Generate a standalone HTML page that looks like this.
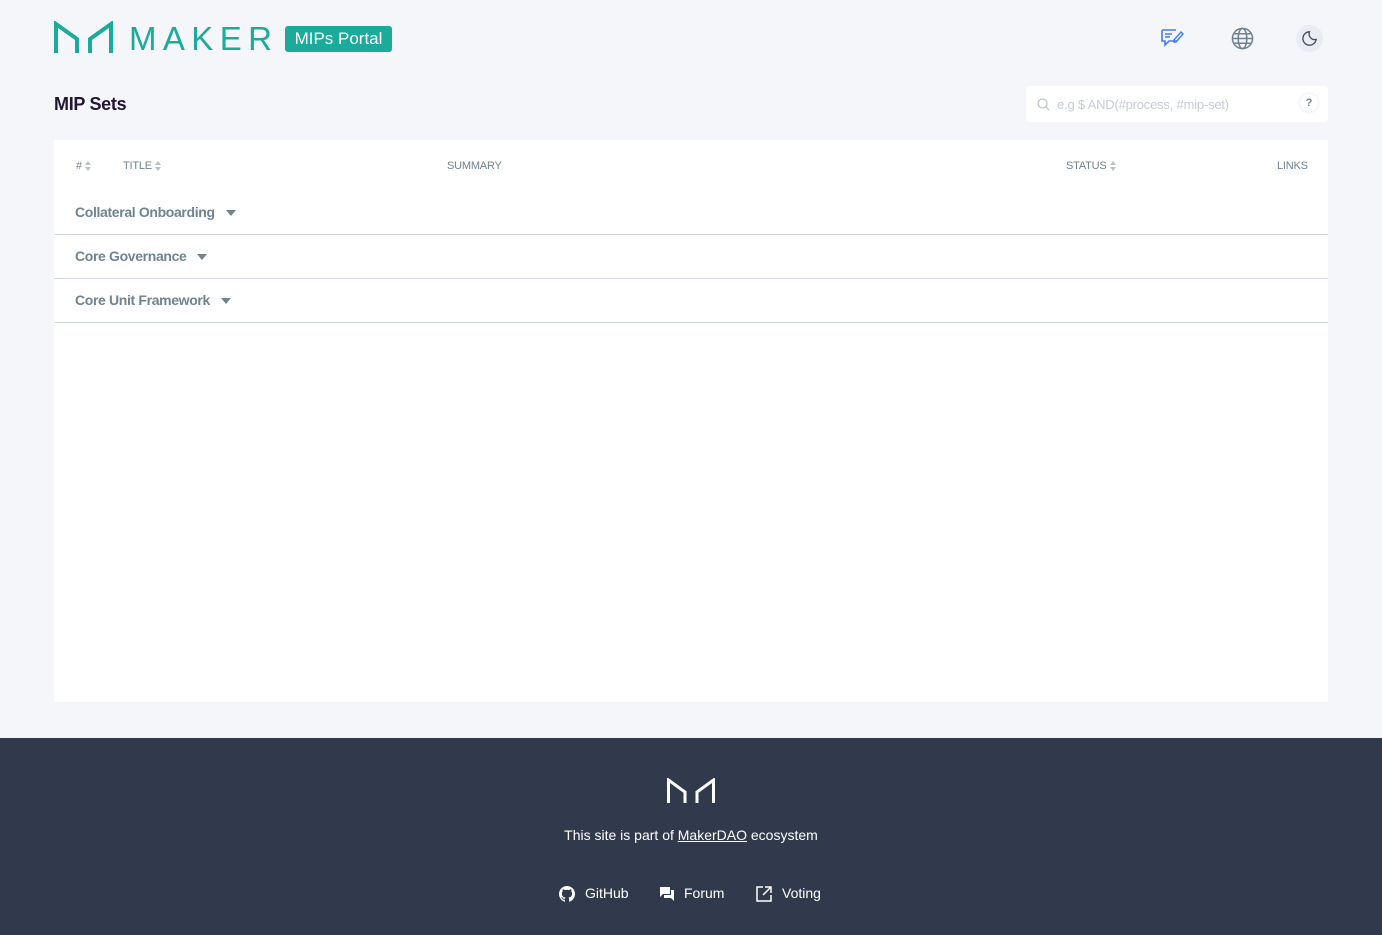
<!DOCTYPE html>
<html><head><meta charset="utf-8"><style>
*{margin:0;padding:0;box-sizing:border-box}
body{width:1382px;height:935px;background:#f4f6fa;font-family:"Liberation Sans",sans-serif;position:relative;overflow:hidden}
.abs{position:absolute}
.maker{left:129px;top:20px;font-size:33px;letter-spacing:6.4px;color:#1aab9b;font-weight:400}
.badge{left:285px;top:26px;width:107px;height:26px;background:#1aab9b;border-radius:3px;color:#fff;font-size:17px;line-height:26px;text-align:center}
h1{position:absolute;left:54px;top:94px;font-size:18px;font-weight:700;color:#231536;letter-spacing:-0.3px}
.search{left:1026px;top:86px;width:302px;height:36px;background:#fff;border-radius:4px}
.card{left:54px;top:140px;width:1274px;height:562px;background:#fff}
.th{font-size:11px;color:#708390;top:160px;letter-spacing:-0.2px}
.row{left:54px;width:1274px;height:44px;border-bottom:1px solid #d4d9e1}
.row span{position:absolute;left:21px;top:13px;font-size:14px;font-weight:700;color:#708390;letter-spacing:-0.35px}
.tri{display:inline-block;width:0;height:0;border-left:5px solid transparent;border-right:5px solid transparent;border-top:6px solid #708390;margin-left:11px;vertical-align:middle}
.footer{left:0;top:738px;width:1382px;height:197px;background:#313a4c;color:#fff}
.sort{display:inline-block;vertical-align:middle;margin-left:3px;width:6px}
</style></head><body>
<svg class="abs" style="left:54px;top:21px" width="59" height="32" viewBox="0 0 59 32"><path d="M2 32V3L23 18V32M57 32V3L36 18V32" fill="none" stroke="#1aab9b" stroke-width="4"/></svg>
<div class="abs maker">MAKER</div>
<div class="abs badge">MIPs Portal</div>
<svg class="abs" style="left:1160px;top:28px" width="24" height="20" viewBox="0 0 24 20"><path d="M2 2h14M2 2v11h3v4l4-4h8" fill="none" stroke="#447afb" stroke-width="1.6"/><path d="M5 6h7M5 9h5" stroke="#447afb" stroke-width="1.6"/><path d="M14 12l7-8 2 2-7 8h-2z" fill="none" stroke="#447afb" stroke-width="1.4"/></svg>
<svg class="abs" style="left:1231px;top:27px" width="23" height="23" viewBox="0 0 24 24"><g fill="none" stroke="#708390" stroke-width="1.6"><circle cx="12" cy="12" r="10.5"/><ellipse cx="12" cy="12" rx="4.5" ry="10.5"/><path d="M1.5 12h21M3 7h18M3 17h18"/></g></svg>
<div class="abs" style="left:1296px;top:25px;width:27px;height:27px;border-radius:50%;background:#e9ecf3"></div>
<svg class="abs" style="left:1300px;top:29px" width="19" height="19" viewBox="0 0 20 20"><path d="M10 3a6 6 0 0 0 7 8 7 7 0 1 1-7-8z" fill="none" stroke="#48495f" stroke-width="1.4"/></svg>
<h1>MIP Sets</h1>
<div class="abs search"><svg class="abs" style="left:11px;top:12px" width="13" height="13" viewBox="0 0 13 13"><circle cx="5.5" cy="5.5" r="4.5" fill="none" stroke="#b6c0cc" stroke-width="1.2"/><path d="M9 9l3 3" stroke="#b6c0cc" stroke-width="1.2"/></svg><span class="abs" style="left:31px;top:11px;font-size:13px;color:#c5ccd6;letter-spacing:-0.2px">e.g $ AND(#process, #mip-set)</span><div class="abs" style="left:274px;top:8px;width:18px;height:18px;border-radius:50%;background:#fff;box-shadow:0 0 3px rgba(0,0,0,.12);font-size:11px;font-weight:700;color:#708390;text-align:center;line-height:18px">?</div></div>
<div class="abs card"></div>
<div class="abs th" style="left:76px">#<svg class="sort" width="6" height="10" viewBox="0 0 6 10"><path d="M0 4L3 0L6 4ZM0 6L3 10L6 6Z" fill="#b6c0cc"/></svg></div>
<div class="abs th" style="left:123px">TITLE<svg class="sort" width="6" height="10" viewBox="0 0 6 10"><path d="M0 4L3 0L6 4ZM0 6L3 10L6 6Z" fill="#b6c0cc"/></svg></div>
<div class="abs th" style="left:447px">SUMMARY</div>
<div class="abs th" style="left:1066px">STATUS<svg class="sort" width="6" height="10" viewBox="0 0 6 10"><path d="M0 4L3 0L6 4ZM0 6L3 10L6 6Z" fill="#b6c0cc"/></svg></div>
<div class="abs th" style="left:1277px">LINKS</div>
<div class="abs row" style="top:191px"><span>Collateral Onboarding<i class="tri"></i></span></div>
<div class="abs row" style="top:235px"><span>Core Governance<i class="tri"></i></span></div>
<div class="abs row" style="top:279px"><span>Core Unit Framework<i class="tri"></i></span></div>
<div class="abs footer">
<svg class="abs" style="left:667px;top:40px" width="48" height="25" viewBox="0 0 48 25"><path d="M1.5 25V2L18 14V25M46.5 25V2L30 14V25" fill="none" stroke="#fff" stroke-width="3"/></svg>
<div class="abs" style="left:0;width:1382px;top:89px;text-align:center;font-size:14px">This site is part of <u>MakerDAO</u> ecosystem</div>
<svg class="abs" style="left:559px;top:148px" width="16" height="16" viewBox="0 0 16 16"><path fill="#fff" d="M8 0C3.6 0 0 3.600 0 8c0 3.5 2.3 6.5 5.5 7.6.4.1.5-.2.5-.4v-1.4c-2.2.5-2.700-1-2.700-1-.4-.9-.9-1.2-.9-1.2-.7-.5.1-.5.1-.5.8.1 1.2.8 1.2.8.7 1.3 1.9.9 2.3.7.1-.5.3-.9.5-1.1-1.8-.2-3.600-.9-3.600-4 0-.9.3-1.600.8-2.100-.1-.2-.4-1 .1-2.100 0 0 .7-.2 2.2.8.6-.2 1.300-.3 2-.3s1.4.1 2 .3c1.5-1 2.2-.8 2.2-.8.4 1.100.2 1.900.1 2.100.5.6.8 1.300.8 2.100 0 3.100-1.900 3.800-3.600 4 .3.3.6.8.6 1.500v2.200c0 .2.1.5.6.4C13.7 14.5 16 11.5 16 8c0-4.4-3.600-8-8-8z"/></svg>
<span class="abs" style="left:585px;top:147px;font-size:14px">GitHub</span>
<svg class="abs" style="left:660px;top:149px" width="15" height="15" viewBox="0 0 15 15"><path fill="#fff" d="M0 0h10v7H3l-3 3zM11 3h3v11l-3-3H4V8h7z"/></svg>
<span class="abs" style="left:684px;top:147px;font-size:14px">Forum</span>
<svg class="abs" style="left:756px;top:148px" width="16" height="16" viewBox="0 0 16 16"><path d="M7 1H1v14h14V9M9 1h6v6M15 1L7 9" fill="none" stroke="#fff" stroke-width="1.5"/></svg>
<span class="abs" style="left:782px;top:147px;font-size:14px">Voting</span>
</div>
</body></html>
